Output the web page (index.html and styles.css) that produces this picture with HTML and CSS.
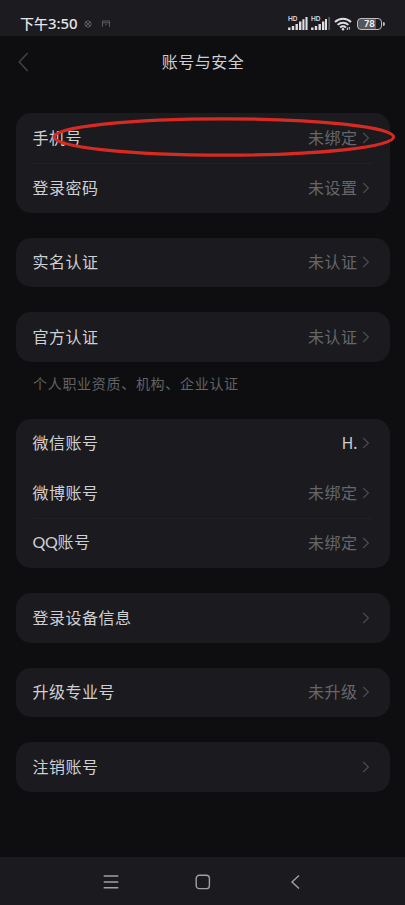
FILE: index.html
```html
<!DOCTYPE html>
<html lang="zh-CN">
<head>
<meta charset="utf-8">
<title>账号与安全</title>
<link rel="stylesheet" href="styles.css">
</head>
<body>
<svg class="defs" width="0" height="0"><defs>
<symbol id="chev" viewBox="0 0 8 12"><path d="M1.2 1 6.4 6 1.2 11" fill="none" stroke="currentColor" stroke-width="1.2"/></symbol>
<symbol id="signal" viewBox="0 0 20 14"><path d="M1.3 10.5v2.5M5 9V13M8.7 7v6M12.2 4.5V13" stroke="#dedee2" stroke-width="2.4" fill="none"/></symbol>
</defs></svg>
<div class="status">
  <span class="time">下午<span class="digits">3:50</span></span>
  <svg class="mini first" width="8" height="8" viewBox="0 0 8 8" fill="none" stroke="#77777c" stroke-width=".7"><circle cx="4" cy="4" r="3.1"/><path d="M1.8 1.8l4.4 4.4M6.2 1.8 1.8 6.2M2.8 4h2.4"/></svg>
  <svg class="mini second" width="8" height="8" viewBox="0 0 8 8" fill="none" stroke="#68686d" stroke-width=".8"><path d="M.5 6.8V1h7v5.8M.5 2.8h7M3.2 4.7h1.6"/></svg>
  <span class="grow"></span>
  <span class="sim"><span class="hd">HD</span><svg width="20" height="14"><use href="#signal" width="20" height="14"/><path d="M15.4 2.3v10.7M18.5 0v13" stroke="#dedee2" stroke-width="2.1"/></svg></span>
  <span class="sim two"><span class="hd">HD</span><svg width="20" height="14"><use href="#signal" width="20" height="14"/><path d="M15 2v11" stroke="#dedee2" stroke-width="2"/><path d="M18.2 0v13" stroke="#56565c" stroke-width="1.8"/></svg></span>
  <svg class="wifi" width="18" height="14" viewBox="0 0 18 14" fill="none" stroke="#dedee2" stroke-width="2"><path d="M1 5a11.5 11.5 0 0 1 16 0M3.6 7.9a7.8 7.8 0 0 1 10.8 0M6.1 10.5a4.2 4.2 0 0 1 5.8 0"/><circle cx="9" cy="12.2" r="1.2" fill="#dedee2" stroke="none"/><path d="M13.3 10.5v2.5m2-3v2.5" stroke-width="1"/></svg>
  <span class="battery"><span>78</span></span>
</div>
<header class="header">
  <svg class="back" width="12" height="20" viewBox="0 0 12 20" fill="none" stroke="#424246" stroke-width="1.5"><path d="M9.7 1 1.3 10l8.4 9"/></svg>
  <h1>账号与安全</h1>
</header>
<main>
  <section class="card">
    <div class="row"><span>手机号</span><span class="value">未绑定</span><svg class="chev"><use href="#chev"/></svg></div>
    <div class="row"><span>登录密码</span><span class="value">未设置</span><svg class="chev"><use href="#chev"/></svg></div>
    <svg class="mark" width="345" height="42" viewBox="0 0 345 42"><ellipse cx="172.8" cy="21" rx="169.7" ry="18.2" fill="none" stroke="#d92a22" stroke-width="3.2"/></svg>
  </section>
  <section class="card"><div class="row"><span>实名认证</span><span class="value">未认证</span><svg class="chev"><use href="#chev"/></svg></div></section>
  <section class="card noted"><div class="row"><span>官方认证</span><span class="value">未认证</span><svg class="chev"><use href="#chev"/></svg></div></section>
  <p class="note">个人职业资质、机构、企业认证</p>
  <section class="card">
    <div class="row"><span>微信账号</span><span class="value name">H.</span><svg class="chev"><use href="#chev"/></svg></div>
    <div class="row faint"><span>微博账号</span><span class="value">未绑定</span><svg class="chev"><use href="#chev"/></svg></div>
    <div class="row"><span><span class="latin">QQ</span>账号</span><span class="value">未绑定</span><svg class="chev"><use href="#chev"/></svg></div>
  </section>
  <section class="card"><div class="row"><span>登录设备信息</span><span class="value"></span><svg class="chev"><use href="#chev"/></svg></div></section>
  <section class="card"><div class="row"><span>升级专业号</span><span class="value">未升级</span><svg class="chev"><use href="#chev"/></svg></div></section>
  <section class="card"><div class="row"><span>注销账号</span><span class="value"></span><svg class="chev"><use href="#chev"/></svg></div></section>
</main>
<nav class="nav">
  <svg width="16" height="16" viewBox="0 0 16 16"><path d="M.7 2h14.6M.7 8h14.6M.7 13.8h14.6"/></svg>
  <svg width="16" height="16" viewBox="0 0 16 16"><rect x="1.2" y="1.2" width="13.2" height="13.4" rx="3.2"/></svg>
  <svg width="16" height="16" viewBox="0 0 16 16"><path d="M12 1.5 5 8l7 6.5"/></svg>
</nav>
</body>
</html>
```
FILE: styles.css
```css
* { box-sizing: border-box; }
body {
  margin: 0;
  height: 905px;
  display: flex;
  flex-direction: column;
  overflow: hidden;
  background: #0e0e10;
  color: #d0d0d3;
  font-family: "Noto Sans CJK SC", sans-serif;
}
svg { display: block; flex: none; }
.defs { position: absolute; }
.status {
  height: 36px;
  flex: none;
  display: flex;
  align-items: center;
  padding: 12px 20px 0 20px;
  background: #1b1b20;
}
.time {
  width: 58px;
  font-size: 14px;
  font-weight: 500;
  line-height: 20px;
  padding-bottom: 2px;
  color: #e4e4e7;
  white-space: nowrap;
}
.digits { font-family: "Noto Sans", sans-serif; font-size: 15px; font-weight: 500; letter-spacing: -.1px; }
.first { margin-left: 6px; }
.second { margin-left: 10px; }
.grow { flex: 1; }
.sim {
  position: relative;
  width: 20px;
  height: 14px;
}
.two { margin-left: 3px; }
.hd {
  position: absolute;
  left: 0;
  top: -2px;
  font: 600 6.5px/8px Inter, sans-serif;
  color: #dedee2;
}
.wifi { margin-left: 3px; }
.battery {
  position: relative;
  width: 25px;
  height: 12px;
  margin: 0 3px 0 5px;
  border: 1.5px solid #bdbdc2;
  border-radius: 4px;
  background: linear-gradient(90deg, #55555b 78%, #1b1b20 78%);
  font: 700 8.5px/10px Inter, sans-serif;
  color: #f0f0f2;
  text-align: center;
}
.battery::after {
  content: "";
  position: absolute;
  right: -4px;
  top: 3px;
  width: 2px;
  height: 4px;
  background: #bdbdc2;
  border-radius: 0 2px 2px 0;
}
.header {
  height: 52px;
  flex: none;
  display: grid;
  grid-template-columns: 40px 1fr 40px;
  align-items: center;
}
.back { margin-left: 18px; }
h1 {
  margin: 0;
  padding: 0 0 2px 1px;
  text-align: center;
  font-size: 16px;
  font-weight: 400;
  line-height: 24px;
  letter-spacing: .5px;
}
main { flex: 1; padding: 25px 15px 0 16px; }
.card {
  position: relative;
  margin-bottom: 25px;
  background: #1b1b1f;
  border-radius: 15px;
}
.row {
  height: 49.75px;
  display: flex;
  align-items: center;
  padding: 0 17px 0 16.5px;
  font-size: 16px;
  line-height: 24px;
  letter-spacing: .5px;
  background: linear-gradient(#212125, #212125) 17px 0 / calc(100% - 34px) 0 no-repeat;
}
.row > span { padding-bottom: 2px; }
.row + .row { background-size: calc(100% - 34px) 1px; }
.row + .faint { background-image: linear-gradient(#1d1d21, #1d1d21); }
.value { margin-left: auto; color: #66666a; }
.row > .name { color: #d0d0d3; letter-spacing: 0; font-family: "Noto Sans", sans-serif; font-size: 15.5px; padding-bottom: 0; }
.latin { font-family: Lato, sans-serif; font-size: 16px; letter-spacing: -.3px; }
.chev {
  width: 8px;
  height: 12px;
  margin: 0 3px 0 4.5px;
  color: #4c4c50;
}
.noted { margin-bottom: 9.5px; }
.note {
  margin: 0 0 25px 17px;
  font-size: 14px;
  line-height: 22px;
  letter-spacing: .7px;
  color: #626265;
}
.mark { position: absolute; left: 35px; top: 3px; }
.nav {
  height: 48px;
  flex: none;
  display: flex;
  justify-content: center;
  align-items: center;
  gap: 76px;
  padding-top: 1px;
  background: #1b1b1f;
}
.nav svg { fill: none; stroke: #a0a0a5; stroke-width: 1.4; }
```
